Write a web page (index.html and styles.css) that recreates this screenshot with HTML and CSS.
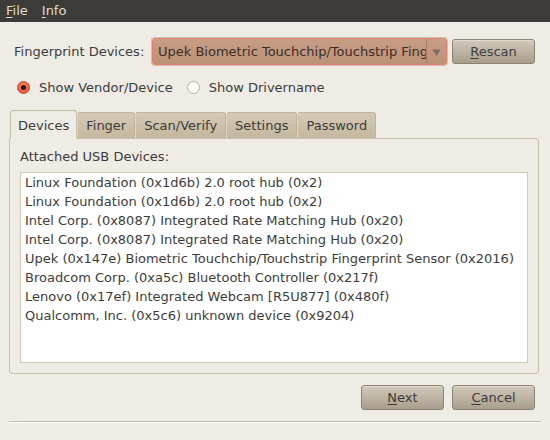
FILE: index.html
```html
<!DOCTYPE html>
<html>
<head>
<meta charset="utf-8">
<link rel="stylesheet" href="styles.css">
</head>
<body>
<div class="menubar">
  <span class="menu"><u>F</u>ile</span>
  <span class="menu"><u>I</u>nfo</span>
</div>
<div class="content">
  <div class="row-devices">
    <span class="label">Fingerprint Devices:</span>
    <div class="combo">
      <span class="combo-text">Upek Biometric Touchchip/Touchstrip Fing</span>
      <span class="combo-arrow"><svg width="9" height="9" viewBox="0 0 9 9"><path d="M0.5 1.5 L8.5 1.5 L4.5 8 Z" fill="#7a6e64"/></svg></span>
    </div>
    <button class="btn btn-rescan"><u>R</u>escan</button>
  </div>
  <div class="row-radios">
    <label class="radio"><span class="radio-dot checked"></span>Show Vendor/Device</label>
    <label class="radio"><span class="radio-dot"></span>Show Drivername</label>
  </div>
  <div class="tabs">
    <div class="tab active">Devices</div>
    <div class="tab">Finger</div>
    <div class="tab">Scan/Verify</div>
    <div class="tab">Settings</div>
    <div class="tab">Password</div>
  </div>
  <div class="panel">
    <div class="panel-label">Attached USB Devices:</div>
    <div class="list">
      <div class="item">Linux Foundation (0x1d6b) 2.0 root hub (0x2)</div>
      <div class="item">Linux Foundation (0x1d6b) 2.0 root hub (0x2)</div>
      <div class="item">Intel Corp. (0x8087) Integrated Rate Matching Hub (0x20)</div>
      <div class="item">Intel Corp. (0x8087) Integrated Rate Matching Hub (0x20)</div>
      <div class="item">Upek (0x147e) Biometric Touchchip/Touchstrip Fingerprint Sensor (0x2016)</div>
      <div class="item">Broadcom Corp. (0xa5c) Bluetooth Controller (0x217f)</div>
      <div class="item">Lenovo (0x17ef) Integrated Webcam [R5U877] (0x480f)</div>
      <div class="item">Qualcomm, Inc. (0x5c6) unknown device (0x9204)</div>
    </div>
  </div>
  <div class="row-buttons">
    <button class="btn"><u>N</u>ext</button>
    <button class="btn"><u>C</u>ancel</button>
  </div>
  <div class="separator"></div>
</div>
</body>
</html>
```
FILE: styles.css
```css
* { box-sizing: border-box; }
html, body {
  margin: 0;
  padding: 0;
  width: 550px;
  height: 440px;
  overflow: hidden;
  background: #efebe5;
  font-family: "DejaVu Sans", sans-serif;
  font-size: 13px;
  color: #3c3c3c;
}
u { text-decoration: underline; text-underline-offset: 2px; text-decoration-thickness: 1px; }

.menubar {
  height: 22px;
  background: #3c3b37;
  display: flex;
  align-items: center;
  gap: 2px;
}
.menu {
  color: #dfdbd2;
  padding: 0 6px;
  line-height: 22px;
}

.content {
  display: flex;
  flex-direction: column;
}

.row-devices {
  display: flex;
  align-items: center;
  margin-top: 16px;
  padding-left: 14px;
  height: 27px;
}
.label {
  width: 138px;
  flex: none;
}
.combo {
  width: 295px;
  height: 27px;
  flex: none;
  display: flex;
  align-items: center;
  border: 1px solid #e6806c;
  border-radius: 3px;
  background: linear-gradient(#c89e86, #be9078);
  box-shadow: 0 0 0 1px rgba(150,110,90,0.35);
  overflow: hidden;
}
.combo-text {
  flex: 1;
  padding-left: 5px;
  white-space: nowrap;
  overflow: hidden;
  color: #3a2e28;
}
.combo-arrow {
  width: 20px;
  height: 100%;
  flex: none;
  border-left: 1px solid #b07c66;
  display: flex;
  align-items: center;
  justify-content: center;
  padding-top: 2px;
}
.btn {
  font-family: "DejaVu Sans", sans-serif;
  font-size: 13px;
  color: #3c3c3c;
  width: 83px;
  height: 25px;
  border: 1px solid #8e8474;
  border-radius: 3px;
  background: linear-gradient(#d3c9bb, #a99e8d);
  box-shadow: inset 0 1px 0 rgba(255,255,255,0.35);
  padding: 0;
  flex: none;
}
.btn-rescan { margin-left: 5px; }

.row-radios {
  display: flex;
  align-items: center;
  gap: 14px;
  height: 22px;
  margin-top: 11px;
  padding-left: 17px;
}
.radio {
  display: flex;
  align-items: center;
  gap: 9px;
}
.radio-dot {
  width: 13px;
  height: 13px;
  border-radius: 50%;
  border: 1px solid #b8ada0;
  background: #fff;
  position: relative;
}
.radio-dot.checked {
  border-color: #c24a2e;
  background: radial-gradient(circle at 50% 40%, #ff8a6a, #e04a2a);
}
.radio-dot.checked::after {
  content: "";
  position: absolute;
  left: 3px;
  top: 3px;
  width: 5px;
  height: 5px;
  border-radius: 50%;
  background: #2a1a14;
}

.tabs {
  display: flex;
  align-items: flex-end;
  margin-top: 11px;
  padding-left: 10px;
  height: 29px;
  position: relative;
  z-index: 1;
}
.tab {
  height: 26px;
  padding: 0 8px;
  display: flex;
  align-items: center;
  background: linear-gradient(#d6cab6, #c5b79e);
  border: 1px solid #c3b399;
  border-bottom: none;
  border-left: 1px solid #e0d6c6;
  border-radius: 3px 3px 0 0;
  color: #3c3c3c;
}
.tab.active {
  height: 29px;
  background: #efebe5;
  border: 1px solid #c9bca4;
  border-bottom: none;
  padding: 0 7px 0 7px;
  margin-bottom: -1px;
}

.panel {
  margin: 0 11px 0 9px;
  height: 236px;
  border: 1px solid #cbbea7;
  border-radius: 0 3px 3px 3px;
  padding: 9px 10px 0 10px;
  background: #efebe5;
}
.panel-label {
  line-height: 17px;
}
.list {
  margin-top: 7px;
  height: 191px;
  background: #fff;
  border: 1px solid #d3c9b7;
  padding: 0 4px;
}
.item {
  line-height: 19px;
  white-space: nowrap;
}

.row-buttons {
  display: flex;
  justify-content: flex-end;
  gap: 8px;
  margin-top: 11px;
  padding-right: 15px;
}
.separator {
  margin: 11px 9px 0 9px;
  height: 2px;
  border-top: 1px solid #c2bcb2;
  border-bottom: 1px solid #ffffff;
}
```
